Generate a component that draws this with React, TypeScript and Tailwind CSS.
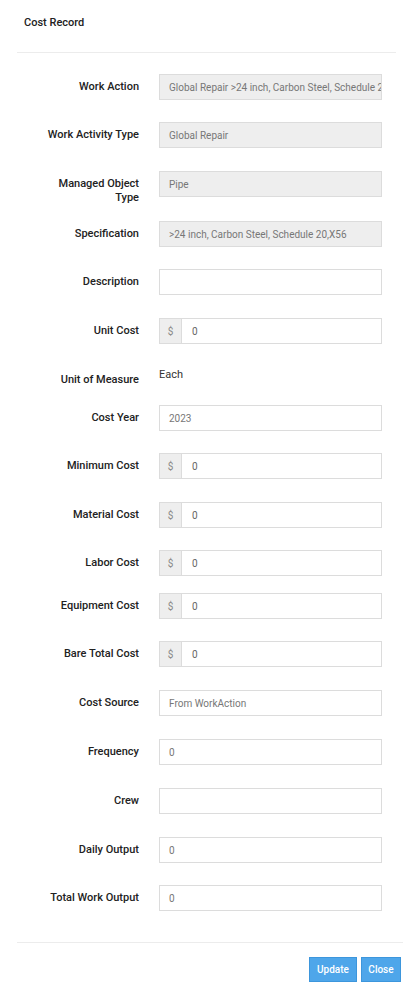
import React from 'react';

type Field = {
  label: string;
  kind: 'disabled' | 'text' | 'money' | 'static';
  value?: string;
  mt: string;
};

const fields: Field[] = [
  { label: 'Work Action', kind: 'disabled', value: 'Global Repair >24 inch, Carbon Steel, Schedule 20,X56', mt: 'mt-[21px]' },
  { label: 'Work Activity Type', kind: 'disabled', value: 'Global Repair', mt: 'mt-[22px]' },
  { label: 'Managed Object Type', kind: 'disabled', value: 'Pipe', mt: 'mt-[23px]' },
  { label: 'Specification', kind: 'disabled', value: '>24 inch, Carbon Steel, Schedule 20,X56', mt: 'mt-[24px]' },
  { label: 'Description', kind: 'text', value: '', mt: 'mt-[22px]' },
  { label: 'Unit Cost', kind: 'money', value: '0', mt: 'mt-[23px]' },
  { label: 'Unit of Measure', kind: 'static', value: 'Each', mt: 'mt-[23px]' },
  { label: 'Cost Year', kind: 'text', value: '2023', mt: 'mt-[19px]' },
  { label: 'Minimum Cost', kind: 'money', value: '0', mt: 'mt-[22px]' },
  { label: 'Material Cost', kind: 'money', value: '0', mt: 'mt-[23px]' },
  { label: 'Labor Cost', kind: 'money', value: '0', mt: 'mt-[22px]' },
  { label: 'Equipment Cost', kind: 'money', value: '0', mt: 'mt-[17px]' },
  { label: 'Bare Total Cost', kind: 'money', value: '0', mt: 'mt-[22px]' },
  { label: 'Cost Source', kind: 'text', value: 'From WorkAction', mt: 'mt-[23px]' },
  { label: 'Frequency', kind: 'text', value: '0', mt: 'mt-[23px]' },
  { label: 'Crew', kind: 'text', value: '', mt: 'mt-[23px]' },
  { label: 'Daily Output', kind: 'text', value: '0', mt: 'mt-[23px]' },
  { label: 'Total Work Output', kind: 'text', value: '0', mt: 'mt-[22px]' },
];

const FieldControl: React.FC<{ field: Field }> = ({ field }) => {
  if (field.kind === 'static') {
    return <div className="pt-[1px] text-[11px] leading-[14px] text-[#333]">{field.value}</div>;
  }
  if (field.kind === 'money') {
    return (
      <div className="flex h-[26px] w-[223px] border border-[#dcdcdc] bg-white">
        <div className="flex w-[22px] items-center justify-center border-r border-[#dcdcdc] bg-[#eeeeee] text-[10px] text-[#888]">
          $
        </div>
        <div className="flex flex-1 items-center pl-[10px] text-[10px] text-[#666]">{field.value}</div>
      </div>
    );
  }
  const disabled = field.kind === 'disabled';
  return (
    <div
      className={`flex h-[26px] w-[223px] items-center overflow-hidden whitespace-nowrap border border-[#dcdcdc] px-[9px] text-[10px] text-[#777] ${
        disabled ? 'bg-[#eeeeee]' : 'bg-white'
      }`}
    >
      {field.value}
    </div>
  );
};

export default function App() {
  return (
    <div className="min-h-[987px] w-[416px] bg-white font-['Roboto',sans-serif]">
      <div className="pl-[24px] pt-[16px] text-[11px] font-medium leading-[14px] text-[#222]">Cost Record</div>
      <div className="ml-[17px] mr-[20px] mt-[22px] h-px bg-[#ececec]" />

      <div className="flex flex-col">
        {fields.map((f) => (
          <div
            key={f.label}
            className={`flex items-start ${f.kind === 'static' ? 'h-[19px]' : 'h-[26px]'} ${f.mt}`}
          >
            <div className="ml-[43px] w-[96px] shrink-0 pt-[6px] text-right text-[11px] font-medium leading-[14px] text-[#222]">
              {f.label}
            </div>
            <div className="ml-[20px]">
              <FieldControl field={f} />
            </div>
          </div>
        ))}
      </div>

      <div className="ml-[17px] mr-[13px] mt-[31px] h-px bg-[#ececec]" />
      <div className="flex justify-end gap-[4px] pr-[15px] pt-[14px]">
        <button className="h-[25px] w-[48px] border border-[#3d96dc] bg-[#4ea6ea] text-[10px] font-medium text-white">
          Update
        </button>
        <button className="h-[25px] w-[40px] border border-[#3d96dc] bg-[#4ea6ea] text-[10px] font-medium text-white">
          Close
        </button>
      </div>
    </div>
  );
}
